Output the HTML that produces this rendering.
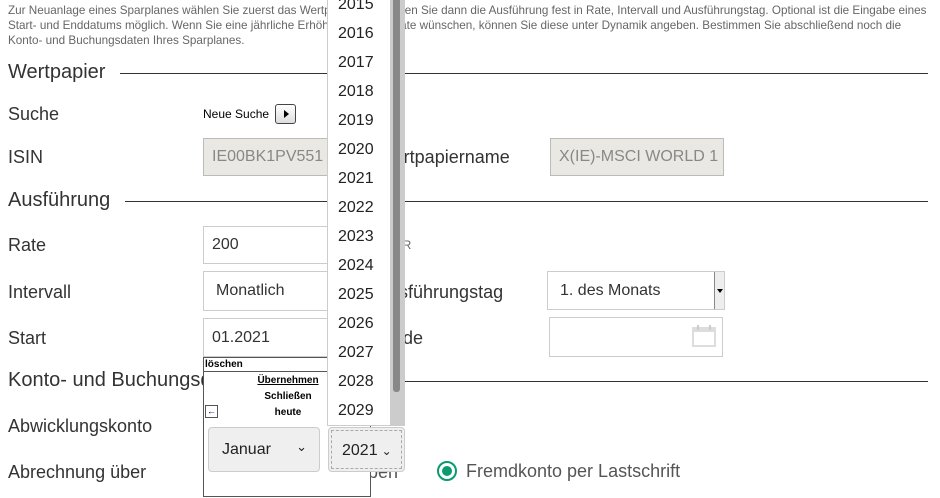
<!DOCTYPE html>
<html><head><meta charset="utf-8"><style>
*{box-sizing:border-box;margin:0;padding:0}
body{width:940px;height:498px;overflow:hidden;background:#fff;font-family:"Liberation Sans",sans-serif;color:#333;position:relative}
.a{position:absolute;white-space:nowrap}
.intro{font-size:11.7px;color:#666;line-height:15px;left:8px;top:3px}
.h{font-size:20px;color:#333}
.line{position:absolute;height:1px;background:#333}
.lbl{font-size:18px;color:#333}
.in{position:absolute;border:1px solid #ccc;background:#fff;font-size:16px;padding-left:8px;display:flex;align-items:center}
.dis{background:#e9e8e2;color:#888;border-color:#bbb}
.yr{position:absolute;left:338px;font-size:16px;color:#222}
</style></head><body>
<div class="a intro">Zur Neuanlage eines Sparplanes wählen Sie zuerst das Wertpapier aus. Legen Sie dann die Ausführung fest in Rate, Intervall und Ausführungstag. Optional ist die Eingabe eines<br>Start- und Enddatums möglich. Wenn Sie eine jährliche Erhöhung der Sparrate wünschen, können Sie diese unter Dynamik angeben. Bestimmen Sie abschließend noch die<br>Konto- und Buchungsdaten Ihres Sparplanes.</div>

<div class="a h" style="left:8px;top:61px">Wertpapier</div><div class="line" style="left:120px;width:808px;top:73px"></div>
<div class="a lbl" style="left:8px;top:104px">Suche</div>
<div class="a" style="left:203px;top:107px;font-size:12px;color:#000">Neue Suche</div>
<div class="a" style="left:275px;top:104px;width:21px;height:20px;border:1px solid #444;border-radius:3px;background:linear-gradient(#fff,#ddd)"><div style="position:absolute;left:8px;top:5px;border-left:5px solid #000;border-top:4px solid transparent;border-bottom:4px solid transparent"></div></div>
<div class="a lbl" style="left:8px;top:147px">ISIN</div>
<div class="in dis" style="left:203px;top:138px;width:140px;height:38px">IE00BK1PV551</div>
<div class="a lbl" style="left:377px;top:147px">Wertpapiername</div>
<div class="in dis" style="left:550px;top:138px;width:174px;height:38px">X(IE)-MSCI WORLD 1</div>

<div class="a h" style="left:8px;top:189px">Ausführung</div><div class="line" style="left:125px;width:803px;top:201px"></div>
<div class="a lbl" style="left:8px;top:235px">Rate</div>
<div class="in" style="left:203px;top:226px;width:140px;height:38px">200</div>
<div class="a" style="left:386px;top:238px;font-size:12px;color:#666">EUR</div>
<div class="a lbl" style="left:8px;top:282px">Intervall</div>
<div class="in" style="left:203px;top:271px;width:140px;height:40px;padding-left:12px">Monatlich</div>
<div class="a lbl" style="left:377px;top:282px">Ausführungstag</div>
<div class="in" style="left:547px;top:271px;width:178px;height:39px;padding-left:12px">1. des Monats<div style="position:absolute;right:0;top:0;width:10px;height:37px;border-left:1px solid #888;background:#eee"><div style="position:absolute;left:2px;top:17px;border-top:4px solid #000;border-left:3px solid transparent;border-right:3px solid transparent"></div></div></div>
<div class="a lbl" style="left:8px;top:328px">Start</div>
<div class="in" style="left:203px;top:318px;width:140px;height:39px">01.2021</div>
<div class="a lbl" style="left:381px;top:328px">Ende</div>
<div class="in" style="left:549px;top:317px;width:174px;height:40px"><svg style="position:absolute;right:6px;top:7px" width="24" height="22"><rect x="1" y="3" width="22" height="18" fill="none" stroke="#ddd" stroke-width="2"/><rect x="1" y="3" width="22" height="4" fill="#ddd"/><rect x="5" y="0" width="2" height="5" fill="#ccc"/><rect x="17" y="0" width="2" height="5" fill="#ccc"/></svg></div>

<div class="a h" style="left:8px;top:369px">Konto- und Buchungsdaten</div><div class="line" style="left:265px;width:663px;top:381px"></div>
<div class="a lbl" style="left:8px;top:416px">Abwicklungskonto</div>
<div class="a lbl" style="left:8px;top:462px">Abrechnung über</div>
<div class="a lbl" style="left:368px;top:462px;color:#555">ben</div>
<div class="a" style="left:437px;top:461px;width:20px;height:20px;border:2px solid #0a9b6f;border-radius:50%;background:#fff"><div style="position:absolute;left:3px;top:3px;width:10px;height:10px;border-radius:50%;background:#0a9b6f"></div></div>
<div class="a lbl" style="left:466px;top:461px;color:#555">Fremdkonto per Lastschrift</div>

<!-- datepicker -->
<div class="a" style="left:203px;top:357px;width:168px;height:140px;border:1px solid #555;background:#fff">
 <div style="height:14px;border-bottom:1px solid #555;font-size:10px;font-weight:bold;color:#000;line-height:13px;padding-left:1px">löschen</div>
 <div style="position:absolute;left:0;width:166px;top:15px;text-align:center;font-size:10px;font-weight:bold;color:#000;line-height:16px;padding-left:2px"><span style="text-decoration:underline">Übernehmen</span><br>Schließen<br>heute</div>
 <div style="position:absolute;left:1px;top:47px;width:13px;height:13px;border:1px solid #555;font-size:9px;line-height:11px;text-align:center;color:#006">&#8592;</div>
</div>
<div class="a" style="left:208px;top:427px;width:112px;height:45px;border:1px solid #ccc;border-radius:4px;background:#efefef;font-size:16px;padding:13px 0 0 13px;color:#222">Januar<span style="position:absolute;right:12px;top:11px;font-size:13px">&#8964;</span></div>
<div class="a" style="left:328px;top:427px;width:77px;height:45px;border:1px solid #ccc;border-radius:4px;background:#efefef"><div style="position:absolute;left:2px;top:2px;right:2px;bottom:2px;border:1px dashed #aaa;font-size:16px;padding:11px 0 0 10px;color:#222">2021<span style="font-size:12px;margin-left:4px">&#8964;</span></div></div>

<!-- year list -->
<div class="a" style="left:327px;top:0;width:78px;height:426px;background:#fff;border-left:1px solid #ccc;border-bottom:1px solid #ccc"></div>
<div class="a" style="left:390px;top:0;width:15px;height:426px;background:#ccc"><div style="position:absolute;left:3px;top:0;width:7px;height:392px;background:#888;border-radius:0 0 3px 3px"></div></div>
<div class="yr" style="top:-4px">2015</div>
<div class="yr" style="top:25px">2016</div>
<div class="yr" style="top:54px">2017</div>
<div class="yr" style="top:83px">2018</div>
<div class="yr" style="top:112px">2019</div>
<div class="yr" style="top:141px">2020</div>
<div class="yr" style="top:170px">2021</div>
<div class="yr" style="top:199px">2022</div>
<div class="yr" style="top:228px">2023</div>
<div class="yr" style="top:257px">2024</div>
<div class="yr" style="top:286px">2025</div>
<div class="yr" style="top:315px">2026</div>
<div class="yr" style="top:344px">2027</div>
<div class="yr" style="top:373px">2028</div>
<div class="yr" style="top:402px">2029</div>
</body></html>
